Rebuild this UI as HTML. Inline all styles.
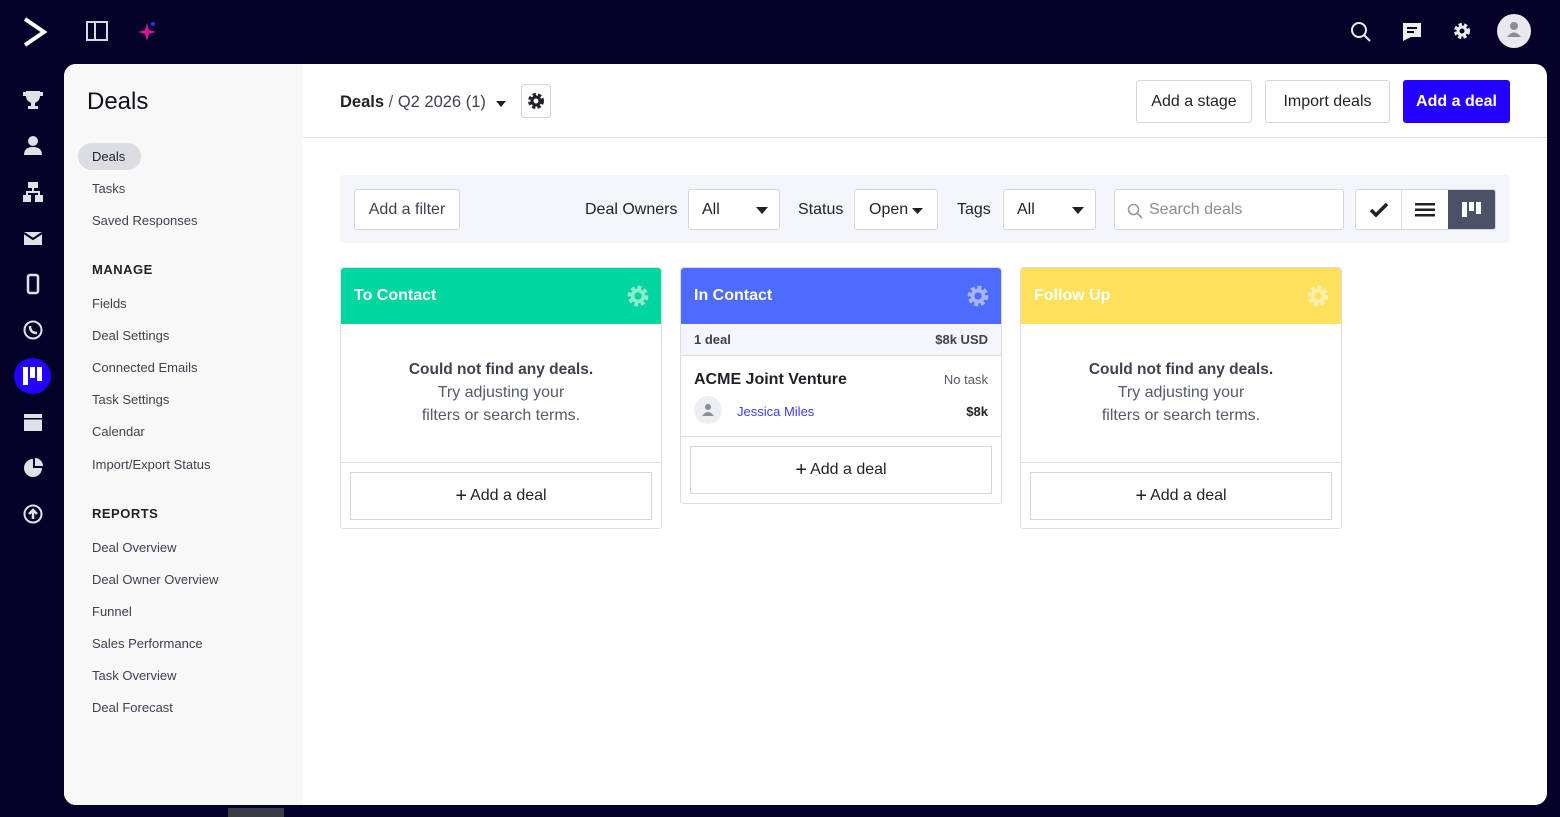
<!DOCTYPE html>
<html><head><style>
*{box-sizing:border-box;margin:0;padding:0}
body{width:1560px;height:817px;background:#040229;font-family:"Liberation Sans",sans-serif;position:relative;overflow:hidden;color:#1f2129}
.abs{position:absolute}
.panel{left:64px;top:64px;width:1483px;height:741px;background:#fff;border-radius:12px;overflow:hidden}
.side{left:0;top:0;width:239px;height:741px;background:#f8f8f9}
.side h1{position:absolute;left:23px;top:24px;font-size:24px;font-weight:400;color:#0d0f1a}
.nav{position:absolute;left:28px;font-size:13px;color:#3e4150}
.sec{position:absolute;left:28px;font-size:13px;font-weight:700;letter-spacing:.5px;color:#1f2129}
.btn{position:absolute;border:1px solid #d4d6e0;border-radius:3px;background:#fff;font-size:16px;color:#1f2129;display:flex;align-items:center;justify-content:center}
.lbl{position:absolute;font-size:16px;color:#1f2129}
.col{position:absolute;width:322px;border:1px solid #dcdde4;border-radius:3px;background:#fff}
.ch{height:56px;color:#fff;font-weight:700;font-size:16px;padding:19px 13px;border-radius:3px 3px 0 0;position:relative}
.gear{position:absolute;right:12px;top:17px}
.empty{text-align:center;font-size:16px;color:#555a6b;line-height:23px}
.add{position:absolute;left:9px;right:9px;height:48px;border:1px solid #d4d6e0;display:flex;align-items:center;justify-content:center;font-size:16px;color:#1f2129}
.ic{position:absolute;left:22px;width:22px;height:22px}
</style></head><body>
<svg class="abs" style="left:22px;top:16px" width="26" height="32" viewBox="0 0 26 32"><path d="M3 3 L22 16 L3 29" fill="none" stroke="#fff" stroke-width="4"/></svg>
<svg class="abs" style="left:86px;top:21px" width="22" height="20"><rect x="1" y="1" width="20" height="18" fill="none" stroke="#d8d8e0" stroke-width="2"/><line x1="9" y1="1" x2="9" y2="19" stroke="#d8d8e0" stroke-width="2"/></svg>
<svg class="abs" style="left:137px;top:21px" width="20" height="20"><path d="M10 2 L12 9 L19 11 L12 13 L10 20 L8 13 L1 11 L8 9Z" fill="#d0169b"/><circle cx="16" cy="3" r="2" fill="#3a2bff"/></svg>
<svg class="abs" style="left:1350px;top:21px" width="22" height="22"><circle cx="9" cy="9" r="7" fill="none" stroke="#eee" stroke-width="2"/><line x1="14" y1="14" x2="20" y2="20" stroke="#eee" stroke-width="2"/></svg>
<svg class="abs" style="left:1402px;top:22px" width="20" height="20"><path d="M1 1h18v14H9l-8 4z" fill="#eee"/><rect x="5" y="5" width="10" height="2" fill="#040229"/><rect x="5" y="9" width="7" height="2" fill="#040229"/></svg>
<svg class="abs" style="left:1453px;top:22px" width="18" height="18" viewBox="0 0 18 18"><circle cx="9" cy="9" r="6" fill="none" stroke="#eee" stroke-width="4" stroke-dasharray="3 2"/><circle cx="9" cy="9" r="4" fill="none" stroke="#eee" stroke-width="3"/></svg>
<div class="abs" style="left:1497px;top:14px;width:34px;height:34px;border-radius:50%;background:#e8e8ee"></div>
<svg class="abs" style="left:1505px;top:20px" width="18" height="20"><circle cx="9" cy="6" r="4" fill="#8a8c99"/><path d="M2 17 Q9 8 16 17Z" fill="#8a8c99"/></svg>
<svg class="ic" style="top:89px" viewBox="0 0 22 22"><path d="M4 2h14v5a7 7 0 0 1-14 0z M1 3h3v4H1z M18 3h3v4h-3z" fill="#e0e0e8"/><rect x="9" y="13" width="4" height="4" fill="#e0e0e8"/><rect x="6" y="17" width="10" height="3" fill="#e0e0e8"/></svg>
<svg class="ic" style="top:135px" viewBox="0 0 22 22"><circle cx="11" cy="6" r="5" fill="#e0e0e8"/><path d="M2 20q0-8 9-8t9 8z" fill="#e0e0e8"/></svg>
<svg class="ic" style="top:181px" viewBox="0 0 22 22"><rect x="6" y="1" width="10" height="6" fill="#e0e0e8"/><rect x="1" y="14" width="8" height="7" fill="#e0e0e8"/><rect x="13" y="14" width="8" height="7" fill="#e0e0e8"/><path d="M11 7v4M5 14v-3h12v3" stroke="#e0e0e8" stroke-width="2" fill="none"/></svg>
<svg class="ic" style="top:227px" viewBox="0 0 22 22"><path d="M2 5h18v13H2z" fill="#e0e0e8"/><path d="M2 6l9 6 9-6" stroke="#040229" stroke-width="2" fill="none"/></svg>
<svg class="ic" style="top:273px" viewBox="0 0 22 22"><rect x="6" y="2" width="10" height="18" rx="2" fill="none" stroke="#e0e0e8" stroke-width="2.5"/></svg>
<svg class="ic" style="top:319px" viewBox="0 0 22 22"><circle cx="11" cy="11" r="8.5" fill="none" stroke="#e0e0e8" stroke-width="2"/><path d="M8 7q0 7 7 7" stroke="#e0e0e8" stroke-width="2.5" fill="none"/></svg>
<div class="abs" style="left:14px;top:358px;width:37px;height:36px;border-radius:50%;background:#2300ff"></div>
<svg class="abs" style="left:23px;top:367px" width="19" height="18"><rect x="0" y="0" width="5" height="18" fill="#fff"/><rect x="7" y="0" width="5" height="11" fill="#fff"/><rect x="14" y="0" width="5" height="14" fill="#fff"/></svg>
<svg class="ic" style="top:411px" viewBox="0 0 22 22"><rect x="2" y="3" width="18" height="17" fill="#e0e0e8"/><rect x="2" y="7" width="18" height="1.5" fill="#040229"/></svg>
<svg class="ic" style="top:457px" viewBox="0 0 22 22"><path d="M11 2a9 9 0 1 0 9 9h-9z" fill="#e0e0e8"/><path d="M13 1v8h8a8 8 0 0 0-8-8z" fill="#e0e0e8"/></svg>
<svg class="ic" style="top:503px" viewBox="0 0 22 22"><circle cx="11" cy="11" r="8.5" fill="none" stroke="#e0e0e8" stroke-width="2"/><path d="M11 16V7M7 11l4-4 4 4" stroke="#e0e0e8" stroke-width="2.5" fill="none"/></svg>
<div class="abs" style="left:228px;top:808px;width:56px;height:9px;background:#3a3a44"></div>

<div class="abs panel">
 <div class="abs side">
  <h1>Deals</h1>
  <div class="abs" style="left:14px;top:79px;width:63px;height:27px;border-radius:14px;background:#dcdde2"></div>
  <div class="nav" style="top:85px;color:#1f2129">Deals</div>
  <div class="nav" style="top:117px">Tasks</div>
  <div class="nav" style="top:149px">Saved Responses</div>
  <div class="sec" style="top:198px">MANAGE</div>
  <div class="nav" style="top:232px">Fields</div>
  <div class="nav" style="top:264px">Deal Settings</div>
  <div class="nav" style="top:296px">Connected Emails</div>
  <div class="nav" style="top:328px">Task Settings</div>
  <div class="nav" style="top:360px">Calendar</div>
  <div class="nav" style="top:393px">Import/Export Status</div>
  <div class="sec" style="top:442px">REPORTS</div>
  <div class="nav" style="top:476px">Deal Overview</div>
  <div class="nav" style="top:508px">Deal Owner Overview</div>
  <div class="nav" style="top:540px">Funnel</div>
  <div class="nav" style="top:572px">Sales Performance</div>
  <div class="nav" style="top:604px">Task Overview</div>
  <div class="nav" style="top:636px">Deal Forecast</div>
 </div>
 <div class="abs" style="left:239px;top:73px;width:1244px;height:1px;background:#dcdde4"></div>
 <div class="lbl" style="left:276px;top:29px;font-size:16.5px"><b style="font-weight:700;color:#1f2129">Deals</b> <span style="color:#555">/</span> <span style="color:#3e4150">Q2 2026 (1)</span></div>
 <svg class="abs" style="left:431px;top:36px" width="12" height="8"><path d="M1 1h10L6 7z" fill="#1f2129"/></svg>
 <div class="btn" style="left:457px;top:20px;width:30px;height:34px"><svg width="18" height="18" viewBox="0 0 18 18"><circle cx="9" cy="9" r="6" fill="none" stroke="#1f2129" stroke-width="4" stroke-dasharray="3 2"/><circle cx="9" cy="9" r="4" fill="none" stroke="#1f2129" stroke-width="3"/></svg></div>
 <div class="btn" style="left:1072px;top:16px;width:116px;height:43px">Add a stage</div>
 <div class="btn" style="left:1201px;top:16px;width:125px;height:43px">Import deals</div>
 <div class="btn" style="left:1339px;top:16px;width:107px;height:43px;background:#2300ff;border-color:#2300ff;color:#fff;font-weight:700">Add a deal</div>

 <div class="abs" style="left:276px;top:111px;width:1170px;height:68px;background:#f4f5fb;border-radius:4px"></div>
 <div class="btn" style="left:290px;top:125px;width:106px;height:41px;color:#3e4150">Add a filter</div>
 <div class="lbl" style="left:521px;top:137px">Deal Owners</div>
 <div class="btn" style="left:624px;top:125px;width:92px;height:41px;justify-content:flex-start;padding-left:13px">All<svg style="position:absolute;right:11px;top:17px" width="12" height="7"><path d="M0 0h12L6 7z" fill="#1f2129"/></svg></div>
 <div class="lbl" style="left:734px;top:137px">Status</div>
 <div class="btn" style="left:790px;top:125px;width:84px;height:41px;justify-content:flex-start;padding-left:14px">Open<svg style="position:absolute;right:14px;top:18px" width="11" height="6"><path d="M0 0h11L5.5 6z" fill="#1f2129"/></svg></div>
 <div class="lbl" style="left:893px;top:137px">Tags</div>
 <div class="btn" style="left:939px;top:125px;width:93px;height:41px;justify-content:flex-start;padding-left:13px">All<svg style="position:absolute;right:11px;top:17px" width="12" height="7"><path d="M0 0h12L6 7z" fill="#1f2129"/></svg></div>
 <div class="btn" style="left:1050px;top:125px;width:230px;height:41px;justify-content:flex-start;padding-left:34px;color:#8a8c99">Search deals<svg style="position:absolute;left:12px;top:13px" width="16" height="16"><circle cx="6.5" cy="6.5" r="5" fill="none" stroke="#999" stroke-width="1.6"/><line x1="10" y1="10" x2="15" y2="15" stroke="#999" stroke-width="1.6"/></svg></div>
 <div class="btn" style="left:1291px;top:125px;width:141px;height:41px;justify-content:flex-start;overflow:hidden">
  <div style="width:47px;height:41px;display:flex;align-items:center;justify-content:center;border-right:1px solid #e0e0e6"><svg width="20" height="16"><path d="M2 8l5 5L18 2" stroke="#1f2129" stroke-width="3.5" fill="none"/></svg></div>
  <div style="width:46px;height:41px;display:flex;align-items:center;justify-content:center"><svg width="20" height="14"><rect y="0" width="20" height="2.5" fill="#1f2129"/><rect y="5.5" width="20" height="2.5" fill="#1f2129"/><rect y="11" width="20" height="2.5" fill="#1f2129"/></svg></div>
  <div style="width:48px;height:41px;background:#4d5167;display:flex;align-items:center;justify-content:center"><svg width="19" height="15"><rect width="5" height="15" fill="#fff"/><rect x="7" width="5" height="9" fill="#fff"/><rect x="14" width="5" height="12" fill="#fff"/></svg></div>
 </div>

 <div class="col" style="left:276px;top:203px;height:262px">
  <div class="ch" style="background:#00d6a0">To Contact<svg class="gear" width="22" height="22" viewBox="0 0 18 18"><circle cx="9" cy="9" r="6.5" fill="none" stroke="#8ee9cf" stroke-width="4" stroke-dasharray="3 2"/><circle cx="9" cy="9" r="4.5" fill="none" stroke="#8ee9cf" stroke-width="3"/></svg></div>
  <div class="empty" style="margin-top:34px"><b style="font-weight:700;color:#3e4150;font-size:15.5px">Could not find any deals.</b><br>Try adjusting your<br>filters or search terms.</div>
  <div style="position:absolute;left:0;right:0;top:194px;border-top:1px solid #dcdde4"></div>
  <div class="add" style="top:204px"><b style="font-size:20px;font-weight:400;margin-right:3px">+</b>Add a deal</div>
 </div>
 <div class="col" style="left:616px;top:203px;height:237px">
  <div class="ch" style="background:#4d6bff">In Contact<svg class="gear" width="22" height="22" viewBox="0 0 18 18"><circle cx="9" cy="9" r="6.5" fill="none" stroke="#a9b5ff" stroke-width="4" stroke-dasharray="3 2"/><circle cx="9" cy="9" r="4.5" fill="none" stroke="#a9b5ff" stroke-width="3"/></svg></div>
  <div style="height:32px;background:#f4f5fb;border-bottom:1px solid #dcdde4;font-size:13px;color:#3e4150;display:flex;justify-content:space-between;align-items:center;padding:0 13px;font-weight:700"><span>1 deal</span><span>$8k USD</span></div>
  <div style="position:relative;height:80px">
   <div class="abs" style="left:13px;top:15px;font-size:16px;color:#1f2129;font-weight:700">ACME Joint Venture</div>
   <div class="abs" style="right:13px;top:16px;font-size:13px;color:#555a6b">No task</div>
   <div class="abs" style="left:13px;top:40px;width:28px;height:28px;border-radius:50%;background:#eceef2"></div>
   <svg class="abs" style="left:21px;top:47px" width="12" height="14"><circle cx="6" cy="4" r="3" fill="#8a8c99"/><path d="M0 13q6-8 12 0z" fill="#8a8c99"/></svg>
   <div class="abs" style="left:56px;top:48px;font-size:13px;color:#3b3bff">Jessica Miles</div>
   <div class="abs" style="right:13px;top:48px;font-size:13px;font-weight:700;color:#1f2129">$8k</div>
  </div>
  <div style="position:absolute;left:0;right:0;top:168px;border-top:1px solid #dcdde4"></div>
  <div class="add" style="top:178px"><b style="font-size:20px;font-weight:400;margin-right:3px">+</b>Add a deal</div>
 </div>
 <div class="col" style="left:956px;top:203px;height:262px">
  <div class="ch" style="background:#ffe05a">Follow Up<svg class="gear" width="22" height="22" viewBox="0 0 18 18"><circle cx="9" cy="9" r="6.5" fill="none" stroke="#fff0b0" stroke-width="4" stroke-dasharray="3 2"/><circle cx="9" cy="9" r="4.5" fill="none" stroke="#fff0b0" stroke-width="3"/></svg></div>
  <div class="empty" style="margin-top:34px"><b style="font-weight:700;color:#3e4150;font-size:15.5px">Could not find any deals.</b><br>Try adjusting your<br>filters or search terms.</div>
  <div style="position:absolute;left:0;right:0;top:194px;border-top:1px solid #dcdde4"></div>
  <div class="add" style="top:204px"><b style="font-size:20px;font-weight:400;margin-right:3px">+</b>Add a deal</div>
 </div>
</div>
</body></html>
